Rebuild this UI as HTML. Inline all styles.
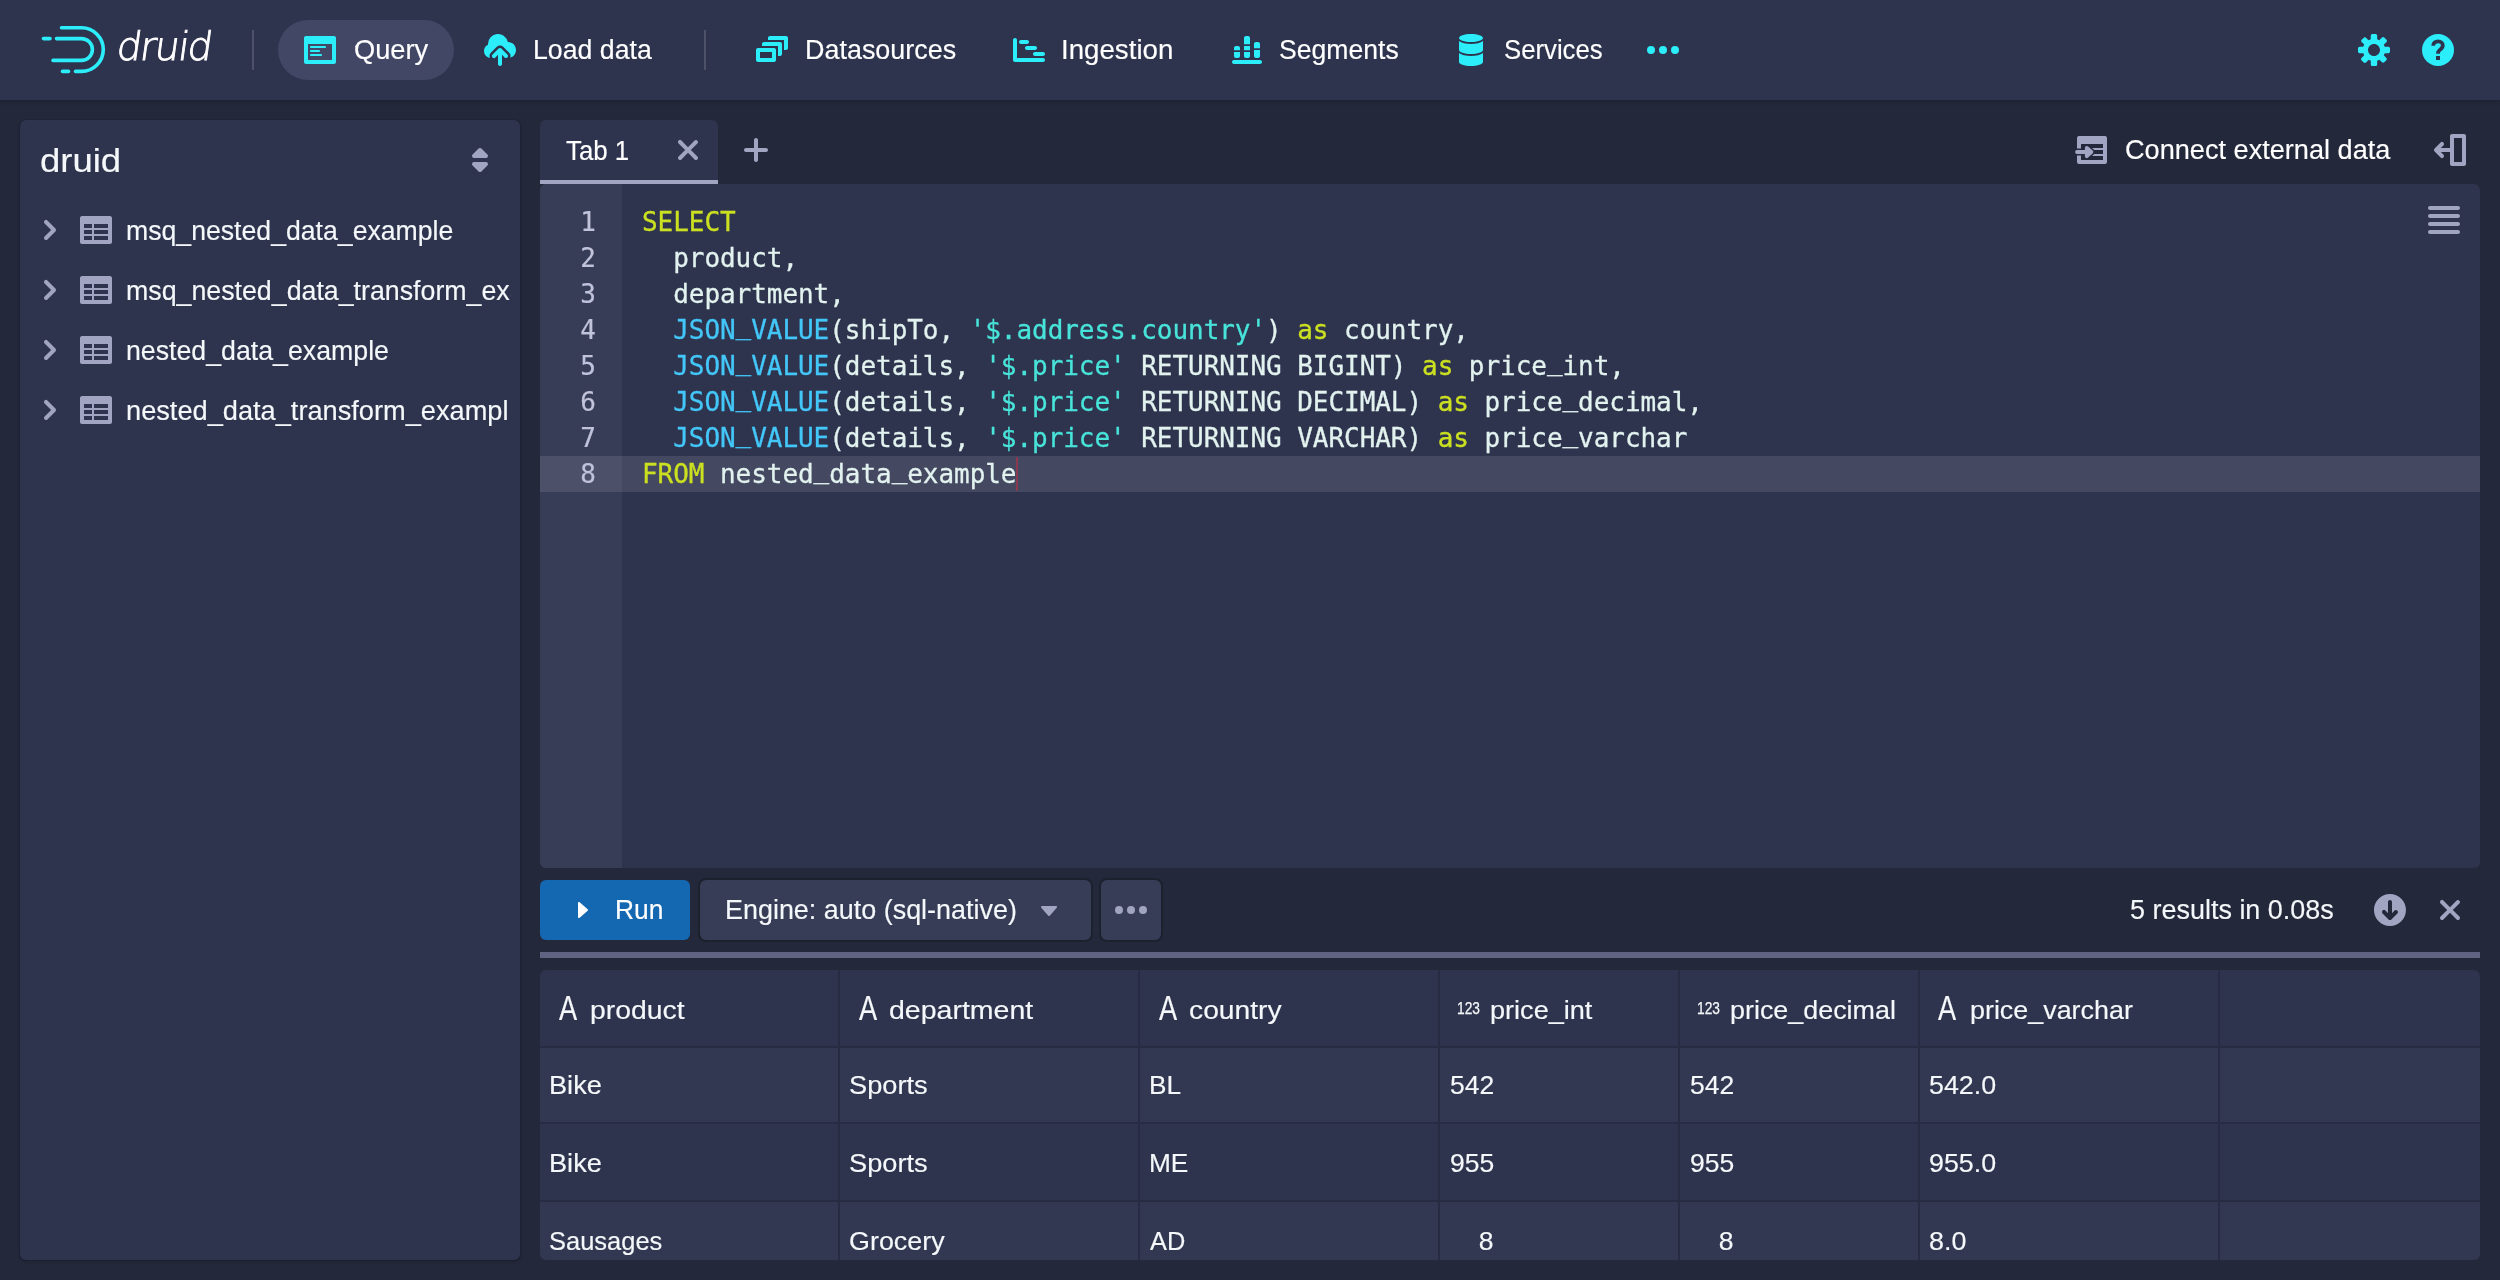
<!DOCTYPE html><html lang="en"><head><meta charset="utf-8"><title>Apache Druid</title><style>
*{box-sizing:border-box;margin:0;padding:0}
html,body{width:2500px;height:1280px;overflow:hidden;background:#24283b;}
body{font-family:"Liberation Sans", sans-serif;position:relative;color:#f5f8fa;}
#app{position:absolute;left:0;top:0;width:2500px;height:1280px;will-change:transform}
.abs,.t,.ic,.c,.sec{position:absolute}
.sec{left:0;top:0;width:0;height:0;overflow:visible;display:block}
.t{white-space:pre;-webkit-text-stroke:.15px}
.ic{display:block;overflow:visible}
.hdr{left:0;top:0;width:2500px;height:100px;background:#2f344e;box-shadow:0 1px 4px rgba(16,22,26,.45);}
.pill{left:278px;top:20px;width:176px;height:60px;border-radius:30px;background:#414765}
.vdiv{width:2px;height:40px;top:30px;background:rgba(255,255,255,.15)}
.panel{background:#2f344e;border-radius:6px}
.code{font-family:"DejaVu Sans Mono", "Liberation Mono", monospace;font-size:26px;line-height:36px;white-space:pre;color:#e1f2ef;letter-spacing:-0.053px;-webkit-text-stroke:.3px}
.kw{color:#cbe020} .fn{color:#43c6f8} .st{color:#48e4da} .u{position:relative;top:-5px}
.ln{font-family:"DejaVu Sans Mono", "Liberation Mono", monospace;font-size:26px;line-height:36px;color:#c0c3da;-webkit-text-stroke:.2px;text-align:right;width:60px;left:536px}
.btn{border-radius:6px;background:#383d57;box-shadow:0 0 0 2px rgba(16,22,26,.4)}
.hline{height:2px;background:#282c42;left:540px;width:1940px}
.vline{width:2px;background:#282c42;top:970px;height:290px}
.stripe{background:rgba(255,255,255,.025);left:540px;width:1940px}
</style></head><body><div id="app">
<nav class="sec" id="header-bar">
<header class="abs hdr"></header>
<div class="abs pill"></div>
<div class="abs vdiv" style="left:252px"></div><div class="abs vdiv" style="left:704px"></div>
<svg class="ic" style="left:36px;top:20px" width="80" height="60" viewBox="36 20 80 60" fill="none" stroke="#2ceefb" stroke-width="3.6" stroke-linecap="round">
<path d="M61.5 27.8H81.5a21.8 21.8 0 0 1 0 43.600H75.500"/><path d="M62.500 71.400H68.500"/>
<path d="M56.500 38.600H81.500a10.900 10.900 0 0 1 0 21.800H53"/><path d="M43.500 38.600H50"/></svg>
<span class="t logo" style="left:115px;top:16.5px;font-family:'DejaVu Sans',sans-serif;font-weight:200;font-size:39.3px;line-height:60px;color:#fff;letter-spacing:-1.5px;-webkit-text-stroke:0.9px #fff;transform:skewX(-8deg);transform-origin:0 44px">druid</span>
<svg class="ic" style="left:304px;top:34px" width="32" height="32" viewBox="0 0 16 16"><path fill="#2ceefb" fill-rule="evenodd" d="M3.5 7h7c.28 0 .5-.22.5-.5s-.22-.5-.5-.5h-7c-.28 0-.5.22-.5.5s.22.5.5.5zM15 1H1c-.55 0-1 .45-1 1v12c0 .55.45 1 1 1h14c.55 0 1-.45 1-1V2c0-.55-.45-1-1-1zm-1 12H2V5h12v8zM3.5 9h4c.28 0 .5-.22.5-.5S7.78 8 7.5 8h-4c-.28 0-.5.22-.5.5s.22.5.5.5zm0 2h5c.28 0 .5-.22.5-.5s-.22-.5-.5-.5h-5c-.28 0-.5.22-.5.5s.22.5.5.5z"/></svg>
<svg class="ic" style="left:756px;top:34px" width="32" height="32" viewBox="0 0 16 16"><path fill="#2ceefb" fill-rule="evenodd" d="M12 3.980H4c-.55 0-1 .45-1 1v1h8v5h1c.55 0 1-.45 1-1v-5c0-.55-.45-1-1-1zm3-3H7c-.55 0-1 .45-1 1v1h8v5h1c.55 0 1-.45 1-1v-5c0-.55-.45-1-1-1zm-6 6H1c-.55 0-1 .45-1 1v5c0 .55.45 1 1 1h8c.55 0 1-.45 1-1v-5c0-.55-.45-1-1-1zm-1 5H2v-3h6v3z"/></svg>
<svg class="ic" style="left:1013px;top:34px" width="32" height="32" viewBox="0 0 16 16"><path fill="#2ceefb" fill-rule="evenodd" d="M4 5h3c.55 0 1-.45 1-1s-.45-1-1-1H4c-.55 0-1 .45-1 1s.45 1 1 1zm2 2c0 .55.45 1 1 1h4c.55 0 1-.45 1-1s-.45-1-1-1H7c-.55 0-1 .45-1 1zm9 5H2V3c0-.55-.45-1-1-1s-1 .45-1 1v10c0 .55.45 1 1 1h14c.55 0 1-.45 1-1s-.45-1-1-1zm-5-2c0 .55.45 1 1 1h4c.55 0 1-.45 1-1s-.45-1-1-1h-4c-.55 0-1 .45-1 1z"/></svg>
<svg class="ic" style="left:1230px;top:34px" width="32" height="32" viewBox="0 0 16 16"><path fill="#2ceefb" fill-rule="evenodd" d="M2 8.1V7c0-.55.45-1 1-1h1c.55 0 1 .45 1 1V8.1V8.1H2zM2 11V9H5V11c0 .55-.45 1-1 1h-1c-.55 0-1-.45-1-1zM7 5.1V2c0-.55.45-1 1-1h1c.55 0 1 .45 1 1V5.1V5.1H7zM7 8.1V6H10V8.1V8.1H7zM7 11V9H10V11c0 .55-.45 1-1 1h-1c-.55 0-1-.45-1-1zM12 7.1V5c0-.55.45-1 1-1h1c.55 0 1 .45 1 1V7.1V7.1H12zM12 11V8H15V11c0 .55-.45 1-1 1h-1c-.55 0-1-.45-1-1zM15 13H2c-.55 0-1 .45-1 1s.45 1 1 1h13c.55 0 1-.45 1-1s-.45-1-1-1z"/></svg>
<svg class="ic" style="left:1455px;top:34px" width="32" height="32" viewBox="0 0 16 16"><path fill="#2ceefb" fill-rule="evenodd" d="M8 4c3.31 0 6-.9 6-2s-2.69-2-6-2C4.68 0 2 .9 2 2s2.68 2 6 2zm-6-.48V8c0 1.1 2.69 2 6 2s6-.9 6-2V3.520C12.780 4.400 10.560 5 8 5s-4.780-.600-6-1.480zm0 6V14c0 1.100 2.690 2 6 2s6-.900 6-2V9.520c-1.220.880-3.440 1.480-6 1.480s-4.780-.600-6-1.480z"/></svg>
<svg class="ic" style="left:1647px;top:34px" width="32" height="32" viewBox="0 0 16 16"><path fill="#2ceefb" fill-rule="evenodd" d="M2 6.030a2 2 0 100 4 2 2 0 100-4zM14 6.030a2 2 0 100 4 2 2 0 100-4zM8 6.030a2 2 0 100 4 2 2 0 100-4z"/></svg>
<svg class="ic" style="left:2358px;top:34px" width="32" height="32" viewBox="0 0 16 16"><path fill="#2ceefb" fill-rule="evenodd" d="M15.190 6.390h-1.850c-.11-.37-.27-.71-.45-1.040l1.360-1.360c.31-.31.31-.82 0-1.130l-1.130-1.130a.803.803 0 00-1.130 0l-1.360 1.360c-.33-.17-.67-.33-1.040-.44V.79c0-.44-.36-.8-.8-.8h-1.600c-.44 0-.8.36-.8.8v1.860c-.39.12-.75.28-1.100.47l-1.300-1.300c-.3-.3-.79-.3-1.090 0L1.820 2.910c-.3.3-.3.79 0 1.090l1.300 1.300c-.2.34-.36.700-.48 1.090H.8c-.44 0-.8.36-.8.8v1.600c0 .44.36.8.8.8h1.850c.11.37.27.71.45 1.040l-1.360 1.360c-.31.31-.31.82 0 1.130l1.130 1.130c.31.31.82.31 1.130 0l1.360-1.360c.33.17.67.33 1.040.44v1.860c0 .44.36.8.8.8h1.600c.44 0 .8-.36.8-.8v-1.860c.39-.12.75-.28 1.100-.47l1.300 1.300c.3.3.79.3 1.090 0l1.090-1.090c.3-.3.3-.79 0-1.090l-1.300-1.300c.19-.35.36-.71.47-1.100h1.860c.44 0 .8-.36.8-.8v-1.600a.816.816 0 00-.82-.79zM8 10.990c-1.660 0-3-1.340-3-3s1.340-3 3-3 3 1.340 3 3-1.340 3-3 3z"/></svg>
<svg class="ic" style="left:484px;top:34px" width="32" height="32" viewBox="0 0 16 16"><path fill="#2ceefb" d="M12 4c-.03 0-.07 0-.1.01A5 5 0 002 5c0 .11.01.22.02.33A3.51 3.51 0 000 8.500C0 10.430 1.570 12 3.500 12H12c2.210 0 4-1.790 4-4s-1.790-4-4-4z"/><path fill="#2f344e" stroke="#2f344e" stroke-width="2.500" stroke-linejoin="round" d="M8.71 7.29C8.53 7.11 8.28 7 8 7s-.53.11-.71.29l-3 3a1.003 1.003 0 001.42 1.42L7 10.41V15c0 .55.45 1 1 1s1-.45 1-1v-4.59l1.29 1.29c.18.19.43.3.71.3a1.003 1.003 0 00.71-1.71l-3-3z"/><path fill="#2ceefb" d="M8.71 7.29C8.53 7.11 8.28 7 8 7s-.53.11-.71.29l-3 3a1.003 1.003 0 001.42 1.42L7 10.41V15c0 .55.45 1 1 1s1-.45 1-1v-4.59l1.29 1.29c.18.19.43.3.71.3a1.003 1.003 0 00.71-1.71l-3-3z"/></svg>
<svg class="ic" style="left:2422px;top:34px" width="32" height="32" viewBox="0 0 16 16"><circle cx="8" cy="8" r="8" fill="#2ceefb"/>
<path d="M5.600 5.900C5.600 4.400 6.700 3.700 8 3.700s2.400.800 2.400 2.100c0 1.100-.700 1.600-1.400 2.100C8.300 8.400 8 8.800 8 9.900" fill="none" stroke="#2f344e" stroke-width="1.900"/><rect x="7" y="11" width="2" height="2" fill="#2f344e"/></svg>
<span class="t " style="left:353.51px;top:32.47px;font-size:27.5px;line-height:36px;color:#ffffff;transform:scaleX(0.9914);transform-origin:0 0;">Query</span>
<span class="t " style="left:533.06px;top:32.47px;font-size:27.5px;line-height:36px;color:#ffffff;transform:scaleX(0.9707);transform-origin:0 0;">Load data</span>
<span class="t " style="left:805.04px;top:32.47px;font-size:27.5px;line-height:36px;color:#ffffff;transform:scaleX(0.9794);transform-origin:0 0;">Datasources</span>
<span class="t " style="left:1061.49px;top:32.47px;font-size:27.5px;line-height:36px;color:#ffffff;transform:scaleX(1.0063);transform-origin:0 0;">Ingestion</span>
<span class="t " style="left:1279.03px;top:32.47px;font-size:27.5px;line-height:36px;color:#ffffff;transform:scaleX(0.9667);transform-origin:0 0;">Segments</span>
<span class="t " style="left:1504.06px;top:32.47px;font-size:27.5px;line-height:36px;color:#ffffff;transform:scaleX(0.9354);transform-origin:0 0;">Services</span>
</nav>
<aside class="sec" id="column-tree">
<div class="abs panel" style="left:20px;top:120px;width:500px;height:1140px;box-shadow:0 0 0 1px rgba(16,22,26,.15),0 2px 3px rgba(16,22,26,.3)"></div>
<svg class="ic" style="left:464px;top:144px" width="32" height="32" viewBox="0 0 16 16"><path fill="#a1a5c1" fill-rule="evenodd" d="M5 7h6a1.003 1.003 0 00.71-1.710l-3-3C8.530 2.110 8.280 2 8 2s-.53.11-.71.29l-3 3A1.003 1.003 0 005 7zm6 2H5a1.003 1.003 0 00-.71 1.710l3 3c.18.180.43.290.71.290s.53-.11.71-.29l3-3A1.003 1.003 0 0011 9z"/></svg>
<svg class="ic" style="left:34px;top:214px" width="32" height="32" viewBox="0 0 16 16"><path fill="#a1a5c1" fill-rule="evenodd" d="M10.710 7.290l-4-4a1.003 1.003 0 00-1.420 1.420L8.590 8 5.300 11.290c-.19.180-.3.430-.3.710a1.003 1.003 0 001.710.710l4-4c.18-.18.29-.43.29-.71 0-.28-.11-.53-.29-.71z"/></svg>
<svg class="ic" style="left:80px;top:214px" width="32" height="32" viewBox="0 0 16 16"><path fill="#a1a5c1" fill-rule="evenodd" d="M15 1H1c-.6 0-1 .5-1 1v12c0 .6.4 1 1 1h14c.6 0 1-.4 1-1V2c0-.5-.4-1-1-1zM6 13H2v-2h4v2zm0-3H2V8h4v2zm0-3H2V5h4v2zm8 6H7v-2h7v2zm0-3H7V8h7v2zm0-3H7V5h7v2z"/></svg>
<svg class="ic" style="left:34px;top:274px" width="32" height="32" viewBox="0 0 16 16"><path fill="#a1a5c1" fill-rule="evenodd" d="M10.710 7.290l-4-4a1.003 1.003 0 00-1.420 1.420L8.590 8 5.300 11.290c-.19.180-.3.430-.3.710a1.003 1.003 0 001.710.710l4-4c.18-.18.29-.43.29-.71 0-.28-.11-.53-.29-.71z"/></svg>
<svg class="ic" style="left:80px;top:274px" width="32" height="32" viewBox="0 0 16 16"><path fill="#a1a5c1" fill-rule="evenodd" d="M15 1H1c-.6 0-1 .5-1 1v12c0 .6.4 1 1 1h14c.6 0 1-.4 1-1V2c0-.5-.4-1-1-1zM6 13H2v-2h4v2zm0-3H2V8h4v2zm0-3H2V5h4v2zm8 6H7v-2h7v2zm0-3H7V8h7v2zm0-3H7V5h7v2z"/></svg>
<svg class="ic" style="left:34px;top:334px" width="32" height="32" viewBox="0 0 16 16"><path fill="#a1a5c1" fill-rule="evenodd" d="M10.710 7.290l-4-4a1.003 1.003 0 00-1.420 1.420L8.590 8 5.300 11.290c-.19.180-.3.430-.3.710a1.003 1.003 0 001.710.710l4-4c.18-.18.29-.43.29-.71 0-.28-.11-.53-.29-.71z"/></svg>
<svg class="ic" style="left:80px;top:334px" width="32" height="32" viewBox="0 0 16 16"><path fill="#a1a5c1" fill-rule="evenodd" d="M15 1H1c-.6 0-1 .5-1 1v12c0 .6.4 1 1 1h14c.6 0 1-.4 1-1V2c0-.5-.4-1-1-1zM6 13H2v-2h4v2zm0-3H2V8h4v2zm0-3H2V5h4v2zm8 6H7v-2h7v2zm0-3H7V8h7v2zm0-3H7V5h7v2z"/></svg>
<svg class="ic" style="left:34px;top:394px" width="32" height="32" viewBox="0 0 16 16"><path fill="#a1a5c1" fill-rule="evenodd" d="M10.710 7.290l-4-4a1.003 1.003 0 00-1.420 1.420L8.590 8 5.300 11.290c-.19.180-.3.430-.3.710a1.003 1.003 0 001.710.710l4-4c.18-.18.29-.43.29-.71 0-.28-.11-.53-.29-.71z"/></svg>
<svg class="ic" style="left:80px;top:394px" width="32" height="32" viewBox="0 0 16 16"><path fill="#a1a5c1" fill-rule="evenodd" d="M15 1H1c-.6 0-1 .5-1 1v12c0 .6.4 1 1 1h14c.6 0 1-.4 1-1V2c0-.5-.4-1-1-1zM6 13H2v-2h4v2zm0-3H2V8h4v2zm0-3H2V5h4v2zm8 6H7v-2h7v2zm0-3H7V8h7v2zm0-3H7V5h7v2z"/></svg>
<span class="t " style="left:39.93px;top:138.22px;font-size:34px;line-height:44px;color:#f5f8fa;transform:scaleX(1.0730);transform-origin:0 0;">druid</span>
<span class="t " style="left:126.33px;top:213.47px;font-size:27.5px;line-height:36px;color:#f5f8fa;transform:scaleX(0.9689);transform-origin:0 0;">msq_nested_data_example</span>
<span class="t clip" style="left:126.33px;top:273.47px;font-size:27.5px;line-height:36px;color:#f5f8fa;width:394.96px;overflow:hidden;transform:scaleX(0.9729);transform-origin:0 0;">msq_nested_data_transform_example</span>
<span class="t " style="left:126.33px;top:333.47px;font-size:27.5px;line-height:36px;color:#f5f8fa;transform:scaleX(0.9717);transform-origin:0 0;">nested_data_example</span>
<span class="t clip" style="left:126.31px;top:393.47px;font-size:27.5px;line-height:36px;color:#f5f8fa;width:386.36px;overflow:hidden;transform:scaleX(0.9890);transform-origin:0 0;">nested_data_transform_example</span>
</aside>
<main class="sec" id="workbench"><div class="sec" id="tab-bar">
<div class="abs" style="left:540px;top:120px;width:178px;height:64px;background:#2f344e;border-radius:6px 6px 0 0"></div>
<div class="abs" style="left:540px;top:180px;width:178px;height:4px;background:#a1a5c1"></div>
<svg class="ic" style="left:672px;top:134px" width="32" height="32" viewBox="0 0 16 16"><path fill="#a1a5c1" fill-rule="evenodd" d="M9.410 8l3.290-3.290c.19-.18.3-.43.3-.71a1.003 1.003 0 00-1.710-.71L8 6.590l-3.290-3.300a1.003 1.003 0 00-1.420 1.420L6.590 8 3.300 11.290c-.19.18-.3.43-.3.71a1.003 1.003 0 001.710.71L8 9.410l3.290 3.290c.18.19.43.3.71.3a1.003 1.003 0 00.71-1.710L9.410 8z"/></svg>
<svg class="ic" style="left:740px;top:134px" width="32" height="32" viewBox="0 0 16 16"><path fill="#a1a5c1" fill-rule="evenodd" d="M13 7H9V3c0-.55-.45-1-1-1s-1 .45-1 1v4H3c-.55 0-1 .45-1 1s.45 1 1 1h4v4c0 .55.45 1 1 1s1-.45 1-1V9h4c.55 0 1-.45 1-1s-.45-1-1-1z"/></svg>
<svg class="ic" style="left:2075px;top:134px" width="32" height="32" viewBox="0 0 16 16"><path fill="#a1a5c1" fill-rule="evenodd" d="M2 1h13c.55 0 1 .45 1 1v12c0 .55-.45 1-1 1H2c-.55 0-1-.45-1-1V2c0-.55.45-1 1-1zm1 4v8h11V5H3z"/>
<rect x="8.500" y="7" width="5.500" height="1" fill="#a1a5c1"/><rect x="8.500" y="10" width="5.500" height="1" fill="#a1a5c1"/>
<path d="M1 9H7.500M5.900 6.900L8.200 9L5.900 11.100z" fill="#a1a5c1" stroke="#24283b" stroke-width="3.400" stroke-linecap="round" stroke-linejoin="round"/>
<path d="M1 9H7.500M5.900 6.900L8.200 9L5.900 11.100z" fill="#a1a5c1" stroke="#a1a5c1" stroke-width="1.900" stroke-linecap="round" stroke-linejoin="round"/></svg>
<svg class="ic" style="left:2434px;top:134px" width="32" height="32" viewBox="0 0 16 16"><path fill="#a1a5c1" fill-rule="evenodd" d="M9 0h6c.55 0 1 .45 1 1v14c0 .55-.45 1-1 1H9c-.55 0-1-.45-1-1V1c0-.55.45-1 1-1zm1 2v12h4V2h-4z"/></svg>
<svg class="ic" style="left:2434px;top:134px" width="32" height="32" viewBox="0 0 16 16"><path fill="#a1a5c1" fill-rule="evenodd" d="M8 7H3.410l1.300-1.290a1.003 1.003 0 00-1.420-1.420l-3 3C.11 7.470 0 7.720 0 8s.11.530.29.710l3 3a1.003 1.003 0 001.420-1.420L3.410 9H8V7z"/></svg>
<span class="t " style="left:566.00px;top:133.17px;font-size:27.5px;line-height:36px;color:#ffffff;transform:scaleX(0.9397);transform-origin:0 0;">Tab 1</span>
<span class="t " style="left:2124.61px;top:131.97px;font-size:27.5px;line-height:36px;color:#ffffff;transform:scaleX(0.9863);transform-origin:0 0;">Connect external data</span>
</div>
<section class="sec" id="query-editor">
<div class="abs panel" style="left:540px;top:184px;width:1940px;height:684px;overflow:hidden"><div class="abs" style="left:0;top:0;width:82px;height:684px;background:#383d57"></div><div class="abs" style="left:0;top:272px;width:1940px;height:36px;background:#444860"></div><div class="abs" style="left:0;top:272px;width:82px;height:36px;background:#4c5068"></div></div>
<svg class="ic" style="left:2428px;top:204px" width="32" height="32" viewBox="0 0 16 16"><path fill="#a1a5c1" fill-rule="evenodd" d="M15 12.980H1c-.55 0-1 .45-1 1s.45 1 1 1h14c.55 0 1-.45 1-1s-.45-1-1-1zm-14-10h14c.55 0 1-.45 1-1s-.45-1-1-1H1c-.55 0-1 .45-1 1s.45 1 1 1zm14 2H1c-.55 0-1 .45-1 1s.45 1 1 1h14c.55 0 1-.45 1-1s-.45-1-1-1zm0 4H1c-.55 0-1 .45-1 1s.45 1 1 1h14c.55 0 1-.45 1-1s-.45-1-1-1z"/></svg>
<div class="abs ln" style="top:204px">1</div>
<div class="abs code" style="left:642px;top:204px"><span class="kw">SELECT</span></div>
<div class="abs ln" style="top:240px">2</div>
<div class="abs code" style="left:642px;top:240px">  product,</div>
<div class="abs ln" style="top:276px">3</div>
<div class="abs code" style="left:642px;top:276px">  department,</div>
<div class="abs ln" style="top:312px">4</div>
<div class="abs code" style="left:642px;top:312px">  <span class="fn">JSON<span class="u">_</span>VALUE</span>(shipTo, <span class="st">&#x27;$.address.country&#x27;</span>) <span class="kw">as</span> country,</div>
<div class="abs ln" style="top:348px">5</div>
<div class="abs code" style="left:642px;top:348px">  <span class="fn">JSON<span class="u">_</span>VALUE</span>(details, <span class="st">&#x27;$.price&#x27;</span> RETURNING BIGINT) <span class="kw">as</span> price<span class="u">_</span>int,</div>
<div class="abs ln" style="top:384px">6</div>
<div class="abs code" style="left:642px;top:384px">  <span class="fn">JSON<span class="u">_</span>VALUE</span>(details, <span class="st">&#x27;$.price&#x27;</span> RETURNING DECIMAL) <span class="kw">as</span> price<span class="u">_</span>decimal,</div>
<div class="abs ln" style="top:420px">7</div>
<div class="abs code" style="left:642px;top:420px">  <span class="fn">JSON<span class="u">_</span>VALUE</span>(details, <span class="st">&#x27;$.price&#x27;</span> RETURNING VARCHAR) <span class="kw">as</span> price<span class="u">_</span>varchar</div>
<div class="abs ln" style="top:456px">8</div>
<div class="abs code" style="left:642px;top:456px"><span class="kw">FROM</span> nested<span class="u">_</span>data<span class="u">_</span>example</div>
<div class="abs" style="left:1016px;top:457px;width:2px;height:34px;background:#8a3a4e"></div>
</section>
<div class="sec" id="run-bar">
<div class="abs" style="left:540px;top:880px;width:150px;height:60px;border-radius:6px;background:#1467b1"></div>
<svg class="ic" style="left:566px;top:894px" width="32" height="32" viewBox="0 0 16 16"><path fill="#ffffff" fill-rule="evenodd" d="M11 8c0-.15-.07-.28-.17-.37l-4-3.500A.495.495 0 006 4.500v7a.495.495 0 00.83.37l4-3.500c.1-.09.17-.22.17-.37z"/></svg>
<div class="abs btn" style="left:700px;top:880px;width:391px;height:60px"></div>
<svg class="ic" style="left:1033px;top:894px" width="32" height="32" viewBox="0 0 16 16"><path fill="#a1a5c1" fill-rule="evenodd" d="M12 6.500c0-.28-.22-.5-.5-.5h-7a.495.495 0 00-.37.830l3.500 4c.09.1.22.17.37.17s.28-.07.37-.17l3.500-4c.08-.09.13-.2.13-.33z"/></svg>
<div class="abs btn" style="left:1101px;top:880px;width:60px;height:60px"></div>
<svg class="ic" style="left:1115px;top:894px" width="32" height="32" viewBox="0 0 16 16"><path fill="#a1a5c1" fill-rule="evenodd" d="M2 6.030a2 2 0 100 4 2 2 0 100-4zM14 6.030a2 2 0 100 4 2 2 0 100-4zM8 6.030a2 2 0 100 4 2 2 0 100-4z"/></svg>
<svg class="ic" style="left:2374px;top:894px" width="32" height="32" viewBox="0 0 16 16"><path fill="#a1a5c1" fill-rule="evenodd" d="M7.990-.010c-4.420 0-8 3.580-8 8s3.580 8 8 8 8-3.580 8-8-3.580-8-8-8zM11.700 9.700l-3 3c-.18.180-.43.290-.71.290s-.53-.11-.71-.29l-3-3A1.003 1.003 0 015.700 8.280l1.290 1.290V3.990c0-.55.45-1 1-1s1 .45 1 1v5.590l1.290-1.290a1.003 1.003 0 011.710.71c0 .27-.11.52-.29.700z"/></svg>
<svg class="ic" style="left:2434px;top:894px" width="32" height="32" viewBox="0 0 16 16"><path fill="#a1a5c1" fill-rule="evenodd" d="M9.410 8l3.290-3.290c.19-.18.3-.43.3-.71a1.003 1.003 0 00-1.710-.71L8 6.590l-3.290-3.300a1.003 1.003 0 00-1.420 1.420L6.590 8 3.300 11.290c-.19.18-.3.43-.3.71a1.003 1.003 0 001.710.71L8 9.410l3.290 3.290c.18.19.43.3.71.3a1.003 1.003 0 00.71-1.710L9.410 8z"/></svg>
<div class="abs" style="left:540px;top:952px;width:1940px;height:6px;background:#5f6483"></div>
<span class="t " style="left:615.08px;top:891.97px;font-size:27.5px;line-height:36px;color:#ffffff;transform:scaleX(0.9586);transform-origin:0 0;">Run</span>
<span class="t " style="left:724.64px;top:891.97px;font-size:27.5px;line-height:36px;color:#f5f8fa;transform:scaleX(0.9792);transform-origin:0 0;">Engine: auto (sql-native)</span>
<span class="t " style="left:2130.22px;top:891.97px;font-size:27.5px;line-height:36px;color:#f5f8fa;transform:scaleX(0.9804);transform-origin:0 0;">5 results in 0.08s</span>
</div>
<section class="sec" id="result-table">
<div class="abs panel" style="left:540px;top:970px;width:1940px;height:290px"></div>
<div class="abs stripe" style="top:1048px;height:74px"></div>
<div class="abs stripe" style="top:1202px;height:58px;border-radius:0 0 6px 6px"></div>
<div class="abs hline" style="top:1046px"></div>
<div class="abs hline" style="top:1122px"></div>
<div class="abs hline" style="top:1200px"></div>
<div class="abs vline" style="left:838px"></div>
<div class="abs vline" style="left:1138px"></div>
<div class="abs vline" style="left:1438px"></div>
<div class="abs vline" style="left:1678px"></div>
<div class="abs vline" style="left:1918px"></div>
<div class="abs vline" style="left:2218px"></div>
<span class="t" style="left:558.50px;top:988.40px;font-size:35px;line-height:40px;color:#f5f8fa;transform:scaleX(.775);transform-origin:0 0">A</span>
<span class="t" style="left:858.90px;top:988.40px;font-size:35px;line-height:40px;color:#f5f8fa;transform:scaleX(.775);transform-origin:0 0">A</span>
<span class="t" style="left:1159.00px;top:988.40px;font-size:35px;line-height:40px;color:#f5f8fa;transform:scaleX(.775);transform-origin:0 0">A</span>
<span class="t" style="left:1938.40px;top:988.40px;font-size:35px;line-height:40px;color:#f5f8fa;transform:scaleX(.775);transform-origin:0 0">A</span>
<svg class="ic" style="left:1456.0px;top:998px" width="26" height="20"><text x="1" y="16.4" font-family="Liberation Sans, sans-serif" font-size="17.2" fill="#f5f8fa" stroke="#f5f8fa" stroke-width=".25" textLength="23" lengthAdjust="spacingAndGlyphs">123</text></svg>
<svg class="ic" style="left:1696.0px;top:998px" width="26" height="20"><text x="1" y="16.4" font-family="Liberation Sans, sans-serif" font-size="17.2" fill="#f5f8fa" stroke="#f5f8fa" stroke-width=".25" textLength="23" lengthAdjust="spacingAndGlyphs">123</text></svg>
<span class="t " style="left:590.18px;top:992.82px;font-size:26.5px;line-height:34px;color:#f5f8fa;transform:scaleX(1.0707);transform-origin:0 0;">product</span>
<span class="t " style="left:889.12px;top:992.82px;font-size:26.5px;line-height:34px;color:#f5f8fa;transform:scaleX(1.0756);transform-origin:0 0;">department</span>
<span class="t " style="left:1189.23px;top:992.82px;font-size:26.5px;line-height:34px;color:#f5f8fa;transform:scaleX(1.0663);transform-origin:0 0;">country</span>
<span class="t " style="left:1489.98px;top:992.82px;font-size:26.5px;line-height:34px;color:#f5f8fa;transform:scaleX(1.0220);transform-origin:0 0;">price_int</span>
<span class="t " style="left:1729.99px;top:992.82px;font-size:26.5px;line-height:34px;color:#f5f8fa;transform:scaleX(1.0148);transform-origin:0 0;">price_decimal</span>
<span class="t " style="left:1969.99px;top:992.82px;font-size:26.5px;line-height:34px;color:#f5f8fa;transform:scaleX(1.0143);transform-origin:0 0;">price_varchar</span>
<span class="t " style="left:548.70px;top:1068.32px;font-size:26.5px;line-height:34px;color:#f5f8fa;transform:scaleX(1.0243);transform-origin:0 0;">Bike</span>
<span class="t " style="left:849.17px;top:1068.32px;font-size:26.5px;line-height:34px;color:#f5f8fa;transform:scaleX(1.0260);transform-origin:0 0;">Sports</span>
<span class="t " style="left:1148.58px;top:1068.49px;font-size:26px;line-height:34px;color:#f5f8fa;transform:scaleX(1.0088);transform-origin:0 0;">BL</span>
<span class="t " style="left:1450.00px;top:1068.32px;font-size:26.5px;line-height:34px;color:#f5f8fa;">542</span>
<span class="t " style="left:1690.00px;top:1068.32px;font-size:26.5px;line-height:34px;color:#f5f8fa;">542</span>
<span class="t " style="left:1929.29px;top:1068.32px;font-size:26.5px;line-height:34px;color:#f5f8fa;transform:scaleX(1.0127);transform-origin:0 0;">542.0</span>
<span class="t " style="left:548.70px;top:1146.32px;font-size:26.5px;line-height:34px;color:#f5f8fa;transform:scaleX(1.0243);transform-origin:0 0;">Bike</span>
<span class="t " style="left:849.17px;top:1146.32px;font-size:26.5px;line-height:34px;color:#f5f8fa;transform:scaleX(1.0260);transform-origin:0 0;">Sports</span>
<span class="t " style="left:1148.58px;top:1146.49px;font-size:26px;line-height:34px;color:#f5f8fa;transform:scaleX(1.0093);transform-origin:0 0;">ME</span>
<span class="t " style="left:1450.00px;top:1146.32px;font-size:26.5px;line-height:34px;color:#f5f8fa;">955</span>
<span class="t " style="left:1690.00px;top:1146.32px;font-size:26.5px;line-height:34px;color:#f5f8fa;">955</span>
<span class="t " style="left:1929.29px;top:1146.32px;font-size:26.5px;line-height:34px;color:#f5f8fa;transform:scaleX(1.0127);transform-origin:0 0;">955.0</span>
<span class="t " style="left:549.44px;top:1224.32px;font-size:26.5px;line-height:34px;color:#f5f8fa;transform:scaleX(0.9613);transform-origin:0 0;">Sausages</span>
<span class="t " style="left:849.18px;top:1224.32px;font-size:26.5px;line-height:34px;color:#f5f8fa;transform:scaleX(1.0150);transform-origin:0 0;">Grocery</span>
<span class="t " style="left:1150.00px;top:1224.49px;font-size:26px;line-height:34px;color:#f5f8fa;transform:scaleX(0.9762);transform-origin:0 0;">AD</span>
<span class="t " style="left:1478.70px;top:1224.32px;font-size:26.5px;line-height:34px;color:#f5f8fa;">8</span>
<span class="t " style="left:1718.70px;top:1224.32px;font-size:26.5px;line-height:34px;color:#f5f8fa;">8</span>
<span class="t " style="left:1929.29px;top:1224.32px;font-size:26.5px;line-height:34px;color:#f5f8fa;transform:scaleX(1.0142);transform-origin:0 0;">8.0</span>
</section></main>
</div></body></html>
